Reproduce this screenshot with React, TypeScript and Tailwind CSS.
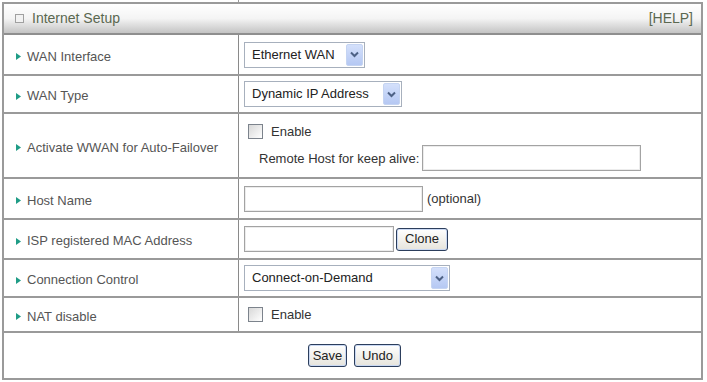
import type { ReactNode } from 'react'

function Chevron() {
  return (
    <svg width="9" height="7" viewBox="0 0 9 7">
      <path d="M1 1.5 L4.5 5 L8 1.5" fill="none" stroke="#4d6185" strokeWidth="2" />
    </svg>
  )
}

function Select({ value, width }: { value: string, width: string }) {
  return (
    <div className={`flex h-[26px] items-stretch border border-[#a7b0bd] bg-white p-px ${width}`}>
      <span className="flex flex-1 items-center pl-[6px] text-[13px] text-[#222]">{value}</span>
      <span className="flex w-[17px] items-center justify-center rounded-[2px] border border-[#c5d4f2] bg-gradient-to-b from-[#d4e0fb] to-[#b5c8f3]">
        <Chevron />
      </span>
    </div>
  )
}

function TextInput({ width }: { width: string }) {
  return <div className={`h-[26px] border border-[#a3a3a3] bg-white shadow-[inset_0_0_0_1px_#ececec] ${width}`} />
}

function Checkbox() {
  return <div className="h-[15px] w-[15px] border border-[#7c838c] bg-gradient-to-br from-[#d8d8d8] to-white" />
}

function Button({ children, width }: { children: ReactNode, width: string }) {
  return (
    <div className={`flex h-[23px] items-center justify-center rounded-[3px] border border-[#2c3e5c] bg-gradient-to-b from-white to-[#e6e4dc] text-[13px] text-[#222] shadow-[inset_0_0_0_1px_#c9d8f3] ${width}`}>
      {children}
    </div>
  )
}

function Row({ label, height, children }: { label: string, height: string, children: ReactNode }) {
  return (
    <div className={`flex border-b-2 border-[#9a9a9a] ${height}`}>
      <div className="flex w-[235px] items-center gap-[6px] border-r border-[#8a8a8a] pl-[12px] pt-[4px] text-[13px] text-[#555]">
        <svg width="5" height="7" viewBox="0 0 5 7">
          <path d="M0 0 L5 3.5 L0 7 Z" fill="#1f9c86" />
        </svg>
        <span>{label}</span>
      </div>
      <div className="flex flex-1 flex-col justify-center pl-[5px]">{children}</div>
    </div>
  )
}

export default function App() {
  return (
    <div className="h-[382px] w-[707px] overflow-hidden bg-white font-['Liberation_Sans',Arial,sans-serif]">
      <div className="ml-[238px] h-[2px] border-l border-[#999]" />
      <div className="ml-[2px] w-[701px] border-2 border-[#9a9a9a]">
        <div className="flex h-[31px] items-center justify-between border-b-2 border-[#8f8f8f] bg-gradient-to-b from-white via-[#f4f4f4] to-[#c4c4c4] pl-[11px] pr-[8px] text-[14px] text-[#5b6850]">
          <div className="flex items-center gap-[8px]">
            <div className="h-[9px] w-[9px] border border-[#a0a0a0] bg-[#f2f2f2]" />
            <span>Internet Setup</span>
          </div>
          <span>[HELP]</span>
        </div>

        <Row label="WAN Interface" height="h-[41px]">
          <Select value="Ethernet WAN" width="w-[121px]" />
        </Row>
        <Row label="WAN Type" height="h-[38px]">
          <Select value="Dynamic IP Address" width="w-[158px]" />
        </Row>
        <Row label="Activate WWAN for Auto-Failover" height="h-[65px]">
          <div className="flex items-center gap-[8px] pl-[4px] pt-[2px] text-[13px] text-[#333]">
            <Checkbox />
            <span>Enable</span>
          </div>
          <div className="mt-[4px] flex items-center gap-[3px] pl-[15px] text-[13px] text-[#333]">
            <span>Remote Host for keep alive:</span>
            <TextInput width="w-[219px]" />
          </div>
        </Row>
        <Row label="Host Name" height="h-[41px]">
          <div className="flex items-center gap-[4px] text-[13px] text-[#333]">
            <TextInput width="w-[179px]" />
            <span>(optional)</span>
          </div>
        </Row>
        <Row label="ISP registered MAC Address" height="h-[40px]">
          <div className="flex items-center gap-[2px]">
            <TextInput width="w-[150px]" />
            <Button width="w-[52px]">Clone</Button>
          </div>
        </Row>
        <Row label="Connection Control" height="h-[38px]">
          <Select value="Connect-on-Demand" width="w-[206px]" />
        </Row>
        <Row label="NAT disable" height="h-[35px]">
          <div className="flex items-center gap-[8px] pl-[4px] text-[13px] text-[#333]">
            <Checkbox />
            <span>Enable</span>
          </div>
        </Row>

        <div className="flex h-[45px] items-center justify-center gap-[7px] pl-[4px]">
          <Button width="w-[39px]">Save</Button>
          <Button width="w-[47px]">Undo</Button>
        </div>
      </div>
    </div>
  )
}
